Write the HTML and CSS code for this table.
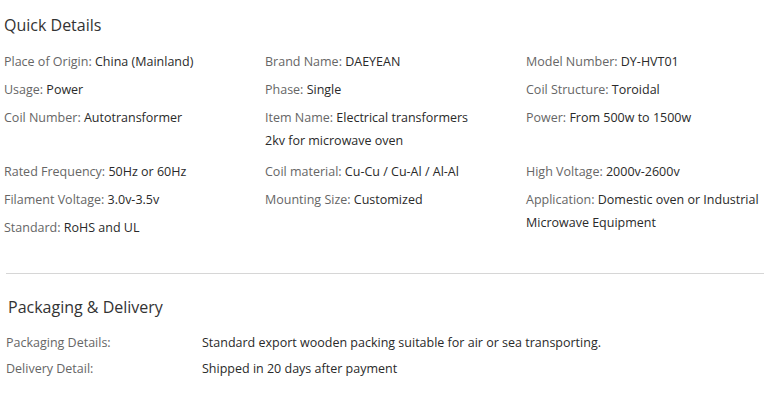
FILE: index.html
```html
<!DOCTYPE html>
<html>
<head>
<meta charset="utf-8">
<link rel="stylesheet" href="styles.css">
</head>
<body>
<div class="page">
  <section class="quick">
    <h2 class="title">Quick Details</h2>
    <ul class="grid">
      <li><span class="k">Place of Origin:</span> <span class="v">China (Mainland)</span></li>
      <li><span class="k">Brand Name:</span> <span class="v">DAEYEAN</span></li>
      <li><span class="k">Model Number:</span> <span class="v">DY-HVT01</span></li>
      <li><span class="k">Usage:</span> <span class="v">Power</span></li>
      <li><span class="k">Phase:</span> <span class="v">Single</span></li>
      <li><span class="k">Coil Structure:</span> <span class="v">Toroidal</span></li>
      <li><span class="k">Coil Number:</span> <span class="v">Autotransformer</span></li>
      <li><span class="k">Item Name:</span> <span class="v">Electrical transformers<br>2kv for microwave oven</span></li>
      <li><span class="k">Power:</span> <span class="v">From 500w to 1500w</span></li>
    </ul>
    <ul class="grid second">
      <li><span class="k">Rated Frequency:</span> <span class="v">50Hz or 60Hz</span></li>
      <li><span class="k">Coil material:</span> <span class="v">Cu-Cu / Cu-Al / Al-Al</span></li>
      <li><span class="k">High Voltage:</span> <span class="v">2000v-2600v</span></li>
      <li><span class="k">Filament Voltage:</span> <span class="v">3.0v-3.5v</span></li>
      <li><span class="k">Mounting Size:</span> <span class="v">Customized</span></li>
      <li class="tall"><span class="k">Application:</span> <span class="v">Domestic oven or Industrial<br>Microwave Equipment</span></li>
      <li><span class="k">Standard:</span> <span class="v">RoHS and UL</span></li>
    </ul>
  </section>
  <hr class="sep">
  <section class="pack">
    <h2 class="title">Packaging &amp; Delivery</h2>
    <div class="prow"><span class="k pk">Packaging Details:</span><span class="v">Standard export wooden packing suitable for air or sea transporting.</span></div>
    <div class="prow"><span class="k pk">Delivery Detail:</span><span class="v">Shipped in 20 days after payment</span></div>
  </section>
</div>
</body>
</html>
```
FILE: styles.css
```css
html, body {
  margin: 0;
  padding: 0;
  background: #fff;
}
body {
  font-family: "Open Sans", "Liberation Sans", sans-serif;
  font-size: 12.5px;
  color: #333;
}
.page {
  width: 764px;
}
.title {
  margin: 0;
  font-weight: normal;
  font-size: 16px;
  color: #333;
  line-height: 20px;
}
.quick {
  padding: 15px 0 0 4px;
}
.grid {
  list-style: none;
  margin: 15px 0 0 0;
  padding: 0;
  display: grid;
  grid-template-columns: 261px 261px 238px;
  row-gap: 5px;
  line-height: 23px;
  white-space: nowrap;
}
.grid.second {
  margin-top: 8px;
}
.tall {
  grid-row: span 2;
}
.k {
  color: #666;
}
.v {
  color: #2a2a2a;
}
.sep {
  margin: 34px 0 0 6px;
  border: 0;
  border-top: 1px solid #d6d6d6;
  height: 0;
}
.pack {
  padding: 23px 0 0 6px;
}
.pack .title {
  padding-left: 2px;
}
.prow {
  display: flex;
  line-height: 26px;
}
.prow:first-of-type {
  margin-top: 13px;
}
.pk {
  width: 196px;
  flex: none;
}
```
